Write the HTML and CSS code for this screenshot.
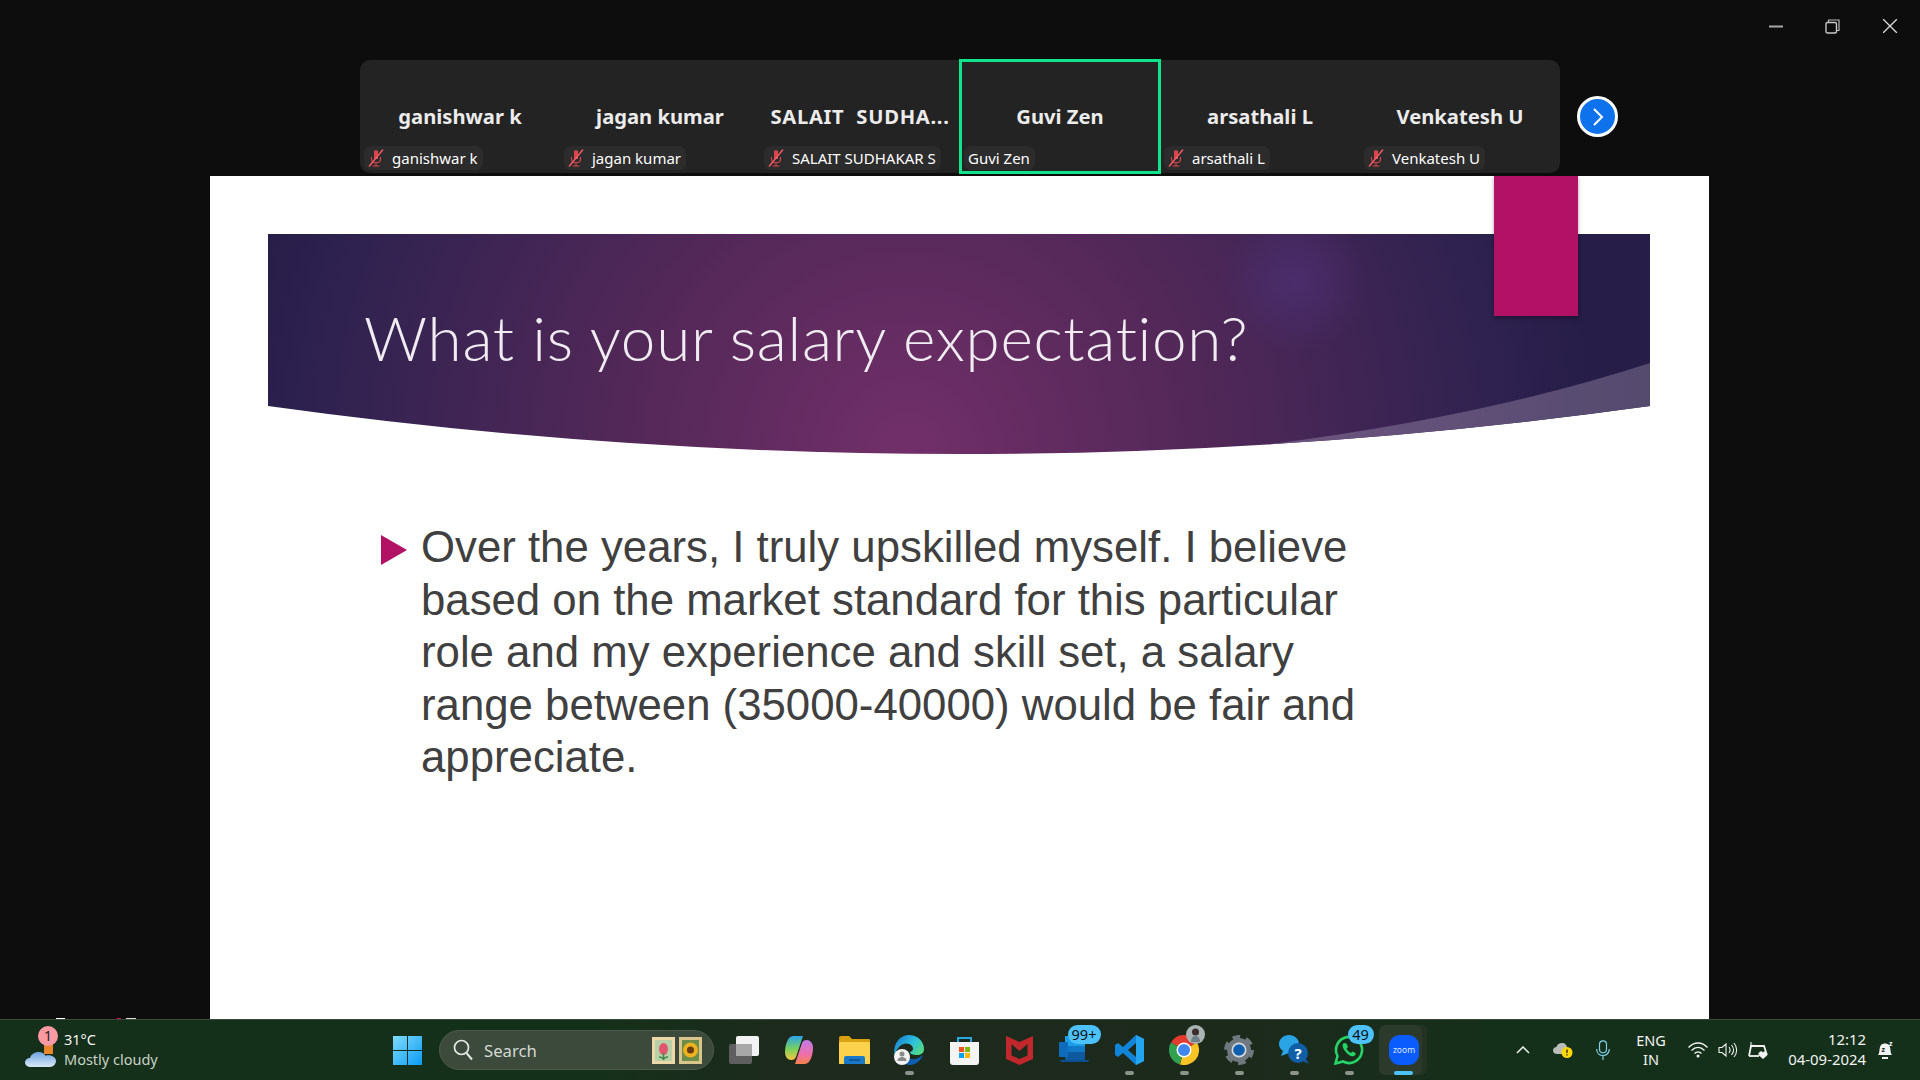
FILE: index.html
```html
<!DOCTYPE html>
<html lang="en">
<head>
  <meta charset="utf-8" />
  <title>Zoom - What is your salary expectation?</title>
  <link rel="stylesheet" href="styles.css">
</head>
<body>

<svg class="defs" width="0" height="0">
  <symbol id="micOff" viewBox="0 0 16 18">
    <path d="M6 1.500h4v8.500H6z" fill="#d9454c"/>
    <path d="M3.500 8v2c0 2.500 2 3.800 4.500 3.800s4.500-1.300 4.500-3.800V8M8 13.800V17M4.500 17h7" fill="none" stroke="#d9454c" stroke-width="1.100"/>
    <path d="M1 17.500 15 .5" stroke="#ee5a60" stroke-width="1.500"/>
  </symbol>
</svg>

<div class="main">
  <div class="titlebar">
    <svg class="winbtn" width="14" height="14" viewBox="0 0 14 14"><path d="M0 7.500h14" stroke="#a8a8a8" stroke-width="2"/></svg>
    <svg class="winbtn" width="15" height="15" viewBox="0 0 15 15"><path d="M3.500 3V1h10.500v10.500h-2" fill="none" stroke="#b8b8b8" stroke-width="1.200"/><rect x="1" y="3.500" width="10.500" height="10.500" rx="1.500" fill="none" stroke="#c8c8c8" stroke-width="1.400"/></svg>
    <svg class="winbtn" width="14" height="14" viewBox="0 0 14 14"><path d="M0 0 14 14M14 0 0 14" stroke="#dcdcdc" stroke-width="1.300"/></svg>
  </div>

  <div class="strip-row">
    <div class="strip">
      <div class="tile">
        <div class="tile-name">ganishwar k</div>
        <div class="tile-label"><svg class="mic" width="16" height="18"><use href="#micOff"/></svg>ganishwar k</div>
      </div>
      <div class="tile">
        <div class="tile-name">jagan kumar</div>
        <div class="tile-label"><svg class="mic" width="16" height="18"><use href="#micOff"/></svg>jagan kumar</div>
      </div>
      <div class="tile">
        <div class="tile-name tile-name-caps">SALAIT&nbsp; SUDHA...</div>
        <div class="tile-label"><svg class="mic" width="16" height="18"><use href="#micOff"/></svg>SALAIT SUDHAKAR S</div>
      </div>
      <div class="tile tile-active">
        <div class="tile-name">Guvi Zen</div>
        <div class="tile-label">Guvi Zen</div>
      </div>
      <div class="tile">
        <div class="tile-name">arsathali L</div>
        <div class="tile-label"><svg class="mic" width="16" height="18"><use href="#micOff"/></svg>arsathali L</div>
      </div>
      <div class="tile">
        <div class="tile-name">Venkatesh U</div>
        <div class="tile-label"><svg class="mic" width="16" height="18"><use href="#micOff"/></svg>Venkatesh U</div>
      </div>
    </div>
    <div class="next-btn">
      <svg width="16" height="22" viewBox="0 0 16 22"><path d="M4 3l8 8-8 8" fill="none" stroke="#fff" stroke-width="2"/></svg>
    </div>
  </div>

  <div class="slide">
    <div class="banner">
      <svg class="banner-bg" width="1382" height="221" viewBox="0 0 1382 221">
        <defs>
          <radialGradient id="bannerGrad" gradientUnits="userSpaceOnUse" cx="640" cy="220" r="690">
            <stop offset="0" stop-color="#722f69"/>
            <stop offset="0.42" stop-color="#522858"/>
            <stop offset="0.85" stop-color="#2f2250"/>
            <stop offset="1" stop-color="#261d48"/>
          </radialGradient>
          <radialGradient id="bannerGlow">
            <stop offset="0" stop-color="#4b2d6c" stop-opacity="1"/>
            <stop offset="1" stop-color="#4b2d6c" stop-opacity="0"/>
          </radialGradient>
          <linearGradient id="swooshGrad" x1="0" y1="0" x2="1" y2="0">
            <stop offset="0" stop-color="#6d5580"/>
            <stop offset="1" stop-color="#544a6e"/>
          </linearGradient>
        </defs>
        <path d="M0 0H1382V172Q691 268 0 172Z" fill="url(#bannerGrad)"/>
        <circle cx="1026" cy="46" r="75" fill="url(#bannerGlow)"/>
        <path d="M1382 129Q1220 182 1000 210.400Q1191 198.500 1382 172Z" fill="url(#swooshGrad)"/>
      </svg>
      <h1 class="slide-title">What is your salary expectation?</h1>
    </div>
    <div class="ribbon"></div>
    <div class="slide-body">
      <svg class="bullet" width="26" height="30" viewBox="0 0 26 30"><path d="M0 0 26 15 0 30Z" fill="#b31166"/></svg>
      <p>Over the years, I truly upskilled myself. I believe based on the market standard for this particular role and my experience and skill set, a salary range between (35000-40000) would be fair and appreciate.</p>
    </div>
  </div>

  <span class="speck speck-a"></span>
  <span class="speck speck-b"></span>
  <span class="speck speck-c"></span>
</div>

<div class="taskbar">
  <div class="weather">
    <div class="weather-icon">
      <svg width="32" height="26" viewBox="0 0 32 26">
        <defs><linearGradient id="cloudGrad" x1="0" y1="0" x2="0" y2="1"><stop offset="0" stop-color="#6ea4e0"/><stop offset="1" stop-color="#dbe9f8"/></linearGradient></defs>
        <rect x="19" y="2" width="9" height="10" fill="#e8862a"/>
        <path d="M6 25c-3.500 0-6-1.800-6-4.500S2.500 16 5 16c1-3.500 4.500-6 8.500-6 3.500 0 6 1.500 7 3.800 1-.5 2-.5 3-.5 4 0 7.500 2.700 7.500 5.700S28 25 25 25Z" fill="url(#cloudGrad)"/>
      </svg>
      <span class="weather-badge">1</span>
    </div>
    <div class="weather-text">
      <div class="weather-temp">31°C</div>
      <div class="weather-desc">Mostly cloudy</div>
    </div>
  </div>

  <svg class="start" width="29" height="29" viewBox="0 0 29 29">
    <defs><linearGradient id="startGrad" x1="0" y1="0" x2="1" y2="1"><stop offset="0" stop-color="#7fdcfb"/><stop offset="1" stop-color="#0b9bf5"/></linearGradient></defs>
    <path d="M0 0h14v14H0zM15 0h14v14H15zM0 15h14v14H0zM15 15h14v14H15z" fill="url(#startGrad)"/>
  </svg>

  <div class="search">
    <svg width="20" height="22" viewBox="0 0 20 22"><circle cx="8.500" cy="8.500" r="7" fill="none" stroke="#e4e8e4" stroke-width="1.700"/><path d="M13.500 14l5.500 6.500" stroke="#e4e8e4" stroke-width="2"/></svg>
    <span class="search-text">Search</span>
    <svg class="stamps" width="50" height="27" viewBox="0 0 50 27">
      <rect x="0" y="0" width="23" height="27" fill="#ead9a6"/>
      <rect x="3" y="3" width="17" height="21" fill="#b7d0a6"/>
      <ellipse cx="11.500" cy="12" rx="4.500" ry="6" fill="#e0556e"/>
      <path d="M11.500 16v6M7 20c2 0 4 1 4.500 3M16 20c-2 0-4 1-4.500 3" stroke="#3f8a4a" stroke-width="1.500" fill="none"/>
      <rect x="27" y="0" width="23" height="27" fill="#d9c48a"/>
      <rect x="30" y="3" width="17" height="21" fill="#6c8c4a"/>
      <circle cx="38.500" cy="13" r="7.500" fill="#eeb21f"/>
      <circle cx="38.500" cy="13" r="3.500" fill="#6b3c12"/>
    </svg>
  </div>

  <div class="apps">
    <div class="app">
      <svg width="30" height="28" viewBox="0 0 30 28"><rect x="0" y="8" width="23" height="20" rx="2" fill="#5f5f5f"/><rect x="7" y="0" width="23" height="20" rx="2" fill="#f2f2f2"/><rect x="7" y="8" width="16" height="12" fill="#a8a8a8"/></svg>
    </div>
    <div class="app">
      <svg width="30" height="30" viewBox="0 0 30 30">
        <defs><linearGradient id="copA" x1="0" y1="0" x2="0" y2="1"><stop offset="0" stop-color="#2aa4ea"/><stop offset="0.55" stop-color="#7ad25a"/><stop offset="1" stop-color="#f5c542"/></linearGradient><linearGradient id="copB" x1="0" y1="0" x2="0" y2="1"><stop offset="0" stop-color="#c27be8"/><stop offset="0.6" stop-color="#ee6fa8"/><stop offset="1" stop-color="#f5824a"/></linearGradient></defs>
        <path d="M9 1h10L12 22c-1 2-2 3-5 3-3 0-6-3-6-8 0-7 3-16 8-16Z" fill="url(#copA)"/>
        <path d="M21 29H11l7-21c1-2 2-3 5-3 3 0 6 3 6 8 0 7-3 16-8 16Z" fill="url(#copB)"/>
      </svg>
    </div>
    <div class="app">
      <svg width="31" height="28" viewBox="0 0 31 28"><path d="M0 2a2 2 0 0 1 2-2h8l3 3h-13Z" fill="#d9a010"/><rect x="0" y="3" width="31" height="25" rx="1" fill="#d9a010"/><rect x="0" y="6" width="31" height="22" rx="1" fill="#fcd24c"/><path d="M5 28v-6a2 2 0 0 1 2-2h17a2 2 0 0 1 2 2v6Z" fill="#1a78c8"/><path d="M10 24h11" stroke="#0a4f90" stroke-width="1.500"/></svg>
    </div>
    <div class="app has-dot">
      <svg width="30" height="30" viewBox="0 0 30 30">
        <defs><linearGradient id="edgeGrad" x1="0" y1="0" x2="1" y2="0.600"><stop offset="0" stop-color="#1272c8"/><stop offset="0.6" stop-color="#2cc0e0"/><stop offset="1" stop-color="#50d88a"/></linearGradient></defs>
        <path d="M15 0c8 0 15 6 15 14 0 4-3 6-7 6-4 0-7-1-7-3 3-1 4-3 2-6-3-4-10-3-13 1-3 3-4 6-4 9C-2 12 4 0 15 0Z" fill="url(#edgeGrad)"/>
        <path d="M12 21c4 5 11 4 17-1-2 6-8 10-13 10-3 0-5-1-6-3Z" fill="#0f5fb0"/>
        <circle cx="8" cy="22" r="8" fill="#f4f4f4"/>
        <circle cx="8" cy="19" r="2.500" fill="#8a8a8a"/>
        <path d="M3.500 26c0-3 2-4 4.500-4s4.500 1 4.500 4Z" fill="#8a8a8a"/>
      </svg>
    </div>
    <div class="app">
      <svg width="29" height="29" viewBox="0 0 29 29"><path d="M8 7V2h13v5" fill="none" stroke="#2aa8e0" stroke-width="2"/><path d="M0 6h29v20a3 3 0 0 1-3 3H3a3 3 0 0 1-3-3Z" fill="#f4f4f4"/><path d="M9 11h5v5H9z" fill="#f25022"/><path d="M15 11h5v5h-5z" fill="#7fba00"/><path d="M9 17h5v5H9z" fill="#00a4ef"/><path d="M15 17h5v5h-5z" fill="#ffb900"/></svg>
    </div>
    <div class="app">
      <svg width="27" height="29" viewBox="0 0 27 29"><path d="M0 0 13.500 6 27 0V23L13.500 29 0 23ZM5.500 8V19.500L13.500 23 21.500 19.500V8L13.500 15Z" fill="#c0282d" fill-rule="evenodd"/></svg>
    </div>
    <div class="app">
      <svg width="31" height="28" viewBox="0 0 31 28"><rect x="6" y="0" width="20" height="22" fill="#1f9ee8"/><rect x="6" y="10" width="20" height="6" fill="#1278c8"/><rect x="6" y="16" width="20" height="8" fill="#0f5a9e"/><path d="M0 24h31l-3 2H3Z" fill="#0c4f90"/><rect x="0" y="6" width="9" height="15" rx="1" fill="#0f6cbd"/></svg>
      <span class="app-badge badge-wide">99+</span>
    </div>
    <div class="app has-dot">
      <svg width="29" height="30" viewBox="0 0 29 30"><path d="M21 0 29 4V26L21 30 8 18 3 22 0 20V10L3 8 8 12Z M21 8 13 15 21 22Z" fill="#1184d8" fill-rule="evenodd"/><path d="M21 0 29 4V26L21 30Z" fill="#23a5f0"/></svg>
    </div>
    <div class="app has-dot">
      <svg width="30" height="30" viewBox="0 0 30 30"><path d="M15 15 2 7.500A15 15 0 0 1 28 7.500Z" fill="#e33b2e"/><path d="M15 15 2 7.500A15 15 0 0 0 11 29.500Z" fill="#31a04f"/><path d="M15 15 28 7.500A15 15 0 0 1 11 29.500Z" fill="#f9c326"/><circle cx="15" cy="15" r="7.500" fill="#fff"/><circle cx="15" cy="15" r="6" fill="#3f86ee"/></svg>
      <svg class="app-avatar" width="19" height="19" viewBox="0 0 19 19"><circle cx="9.500" cy="9.500" r="9.500" fill="#aab4b4"/><circle cx="9.500" cy="7" r="3.500" fill="#3a2e2a"/><path d="M5 17c0-4 2-6 4.500-6s4.500 2 4.500 6Z" fill="#6f8088"/></svg>
    </div>
    <div class="app has-dot">
      <svg width="30" height="30" viewBox="0 0 30 30"><circle cx="15" cy="15" r="12" fill="#70787f"/><circle cx="15" cy="15" r="13" fill="none" stroke="#70787f" stroke-width="4" stroke-dasharray="7.600 6"/><circle cx="15" cy="15" r="7.500" fill="#d4d8dc"/><circle cx="15" cy="15" r="5.800" fill="#0f5fb0"/></svg>
    </div>
    <div class="app has-dot">
      <svg width="30" height="30" viewBox="0 0 30 30"><path d="M10 0c5.500 0 10 4 10 9s-4 9-9 9l-1 0-8 3 2-5C1.500 14 0 12 0 9c0-5 4.500-9 10-9Z" fill="#2ba4e6"/><circle cx="19" cy="18" r="10" fill="#0f5ea8"/><path d="M24 26l6 3-4-6Z" fill="#0f5ea8"/><text x="19" y="24" class="help-mark">?</text></svg>
    </div>
    <div class="app has-dot">
      <svg width="30" height="30" viewBox="0 0 30 30"><path d="M1.500 28.500 3.500 21A13 13 0 1 1 9 26.500Z" fill="none" stroke="#25d366" stroke-width="2.600"/><path d="M10 8c-2 1-2 4 1 8s6 6 9 5c1-.5 2-2 1.500-3l-3-1.500-1.500 1.500c-2-1-3.500-2.500-4.500-4.500l1.500-1.500-1.500-3.500Z" fill="#25d366"/></svg>
      <span class="app-badge badge-round">49</span>
    </div>
    <div class="app app-current">
      <svg width="30" height="30" viewBox="0 0 30 30"><rect width="30" height="30" rx="11" fill="#0b5cff"/><text x="15" y="18" class="zoom-mark">zoom</text></svg>
    </div>
  </div>

  <div class="tray">
    <svg width="14" height="8" viewBox="0 0 14 8"><path d="M1 7l6-6 6 6" fill="none" stroke="#f2f2f2" stroke-width="1.500"/></svg>
    <svg class="tray-cloud" width="20" height="15" viewBox="0 0 20 15"><path d="M4 11C1.500 11 0 9.500 0 7.500S1.500 4 3.500 4C4 1.500 6.500 0 9 0c3 0 5 2 5 5v6Z" fill="#b9bcb9"/><circle cx="14" cy="9.500" r="5.500" fill="#ffd60a"/><path d="M14 6.500v3.500M14 11.200v1.300" stroke="#222" stroke-width="1.300"/></svg>
    <svg class="tray-mic" width="14" height="20" viewBox="0 0 14 20"><rect x="3.500" y="0.800" width="7" height="12" rx="3.500" fill="none" stroke="#7fd0e8" stroke-width="1.200"/><path d="M.7 9c0 4 2.800 6.500 6.300 6.500s6.300-2.500 6.300-6.500M7 15.500V20" fill="none" stroke="#7fd0e8" stroke-width="1.200"/></svg>
    <div class="tray-lang">ENG<br>IN</div>
    <svg class="tray-wifi" width="20" height="16" viewBox="0 0 20 16"><path d="M.5 5.500C6-.5 14-.5 19.500 5.500M3.500 8.500c4-4 9-4 13 0M6.500 11.500c2-2 5-2 7 0" fill="none" stroke="#f2f2f2" stroke-width="1.300"/><circle cx="10" cy="14" r="1.500" fill="#f2f2f2"/></svg>
    <svg class="tray-vol" width="20" height="16" viewBox="0 0 20 16"><path d="M1 5.500h3L8 2v12l-4-3.500H1Z" fill="none" stroke="#f2f2f2" stroke-width="1.100"/><path d="M11 5c1.500 2 1.500 4 0 6M13.500 3c2.500 3 2.500 7 0 10M16 1c3.500 4 3.500 10 0 14" fill="none" stroke="#f2f2f2" stroke-width="1.100"/></svg>
    <svg class="tray-batt" width="20" height="17" viewBox="0 0 20 17"><path d="M1 14 3 4h13l2 6" fill="none" stroke="#f2f2f2" stroke-width="1.800"/><path d="M1 14h10" stroke="#f2f2f2" stroke-width="1.800"/><path d="M3 0v5l3-2" fill="none" stroke="#f2f2f2" stroke-width="1.100"/><path d="M15 17l-4-3.500a2.300 2.300 0 0 1 4-3 2.300 2.300 0 0 1 4 3Z" fill="#f2f2f2"/></svg>
    <div class="clock">12:12<br>04-09-2024</div>
    <svg class="tray-bell" width="17" height="21" viewBox="0 0 17 21"><path d="M1 15c2-2 1-8 3-10 2-2 6-2 8 0 2 2 1 8 3 10Z" fill="#f2f2f2"/><path d="M5 18h6" stroke="#f2f2f2" stroke-width="2"/><text x="4.500" y="12" class="bell-z">z</text><text x="12" y="6" class="bell-z2">z</text></svg>
  </div>
</div>

</body>
</html>
```

FILE: styles.css
```css
html, body {
  margin: 0;
  padding: 0;
}

body {
  width: 1920px;
  height: 1080px;
  overflow: hidden;
  background: #0d0d0d;
  display: flex;
  flex-direction: column;
  font-family: "Noto Sans", "Open Sans", sans-serif;
}

.defs {
  position: absolute;
}

.main {
  position: relative;
  height: 1019px;
  display: flex;
  flex-direction: column;
}

/* window buttons */
.titlebar {
  height: 59px;
  box-sizing: border-box;
  padding: 19px 23px 0 0;
  display: flex;
  justify-content: flex-end;
  align-items: flex-start;
  gap: 42px;
}

.winbtn:last-child {
  margin-left: 1px;
}

/* participant strip */
.strip-row {
  height: 117px;
  padding-left: 360px;
  display: flex;
  align-items: flex-start;
}

.strip {
  width: 1200px;
  height: 113px;
  margin-top: 1px;
  background: #232323;
  border-radius: 10px;
  display: flex;
}

.tile {
  width: 200px;
  box-sizing: border-box;
  padding: 0 4px 3px;
  display: flex;
  flex-direction: column;
  color: #fff;
}

.tile-active {
  outline: 3px solid #0fe38c;
  outline-offset: -2px;
}

.tile-name {
  margin-top: 41px;
  height: 30px;
  line-height: 30px;
  font-size: 20.200px;
  font-weight: 700;
  text-align: center;
  color: #ececec;
  white-space: nowrap;
}

.tile-name-caps {
  letter-spacing: 0.700px;
}

.tile-label {
  margin-top: auto;
  align-self: flex-start;
  height: 24px;
  line-height: 24px;
  padding: 0 5px 0 4px;
  border-radius: 7px;
  background: #2c2c2c;
  font-size: 15px;
  white-space: nowrap;
  display: flex;
  align-items: center;
}

.mic {
  margin-right: 8px;
  flex: none;
}

.next-btn {
  width: 35px;
  height: 35px;
  margin: 37px 0 0 17px;
  border: 3px solid #fff;
  border-radius: 50%;
  background: #0e72ed;
  display: flex;
  align-items: center;
  justify-content: center;
}

/* slide */
.slide {
  position: relative;
  width: 1499px;
  flex: 1;
  margin-left: 210px;
  padding-top: 58px;
  box-sizing: border-box;
  background: #fff;
  overflow: hidden;
}

.banner {
  position: relative;
  width: 1382px;
  height: 221px;
  margin-left: 58px;
  padding: 67px 0 0 96px;
  box-sizing: border-box;
}

.banner-bg {
  position: absolute;
  left: 0;
  top: 0;
}

.slide-title {
  position: relative;
  margin: 0;
  font-family: "Lato", sans-serif;
  font-weight: 300;
  font-size: 62px;
  line-height: 72px;
  letter-spacing: 0.700px;
  color: #f0ecf2;
  white-space: nowrap;
}

.ribbon {
  position: absolute;
  left: 1284px;
  top: 0;
  width: 84px;
  height: 140px;
  background: #b31166;
  box-shadow: 0 2px 4px rgba(0, 0, 0, 0.35);
}

.slide-body {
  margin: 66px 0 0 171px;
  display: flex;
  align-items: flex-start;
}

.bullet {
  flex: none;
  margin: 14px 14px 0 0;
}

.slide-body p {
  margin: 0;
  width: 960px;
  font-family: "Liberation Sans", Arial, sans-serif;
  font-size: 43.750px;
  line-height: 52.600px;
  color: #404040;
}

.speck {
  position: absolute;
  top: 1018px;
  height: 1px;
}

.speck-a {
  left: 56px;
  width: 9px;
  background: #fff;
}

.speck-b {
  left: 117px;
  width: 4px;
  background: #c8105f;
}

.speck-c {
  left: 126px;
  width: 10px;
  background: #ddd;
}

/* taskbar */
.taskbar {
  height: 61px;
  box-sizing: border-box;
  border-top: 1px solid #3b4a3b;
  background: linear-gradient(90deg, #15301a 0, #15301a 600px, #1d2a1d 800px, #1c2a1c 1250px, #14301a 1500px, #14301a 100%);
  display: flex;
  align-items: center;
  color: #f2f2f2;
}

.weather {
  width: 393px;
  flex: none;
  box-sizing: border-box;
  padding-left: 25px;
  display: flex;
  align-items: center;
}

.weather-icon {
  position: relative;
  width: 32px;
  height: 26px;
  margin: 9px 7px 0 0;
}

.weather-badge {
  position: absolute;
  left: 13px;
  top: -16px;
  width: 20px;
  height: 20px;
  line-height: 20px;
  border-radius: 50%;
  background: #ff99a4;
  color: #222;
  font-size: 14px;
  text-align: center;
}

.weather-text {
  margin-top: -2px;
  font-size: 14.500px;
  line-height: 20px;
}

.weather-temp {
  color: #f4f4f4;
}

.weather-desc {
  color: #c8d0c8;
}

.start {
  flex: none;
  margin-right: 17px;
}

.search {
  width: 275px;
  height: 40px;
  flex: none;
  box-sizing: border-box;
  padding: 0 11px 0 13px;
  margin-right: 2.500px;
  border: 1px solid #4b5a4b;
  border-radius: 20px;
  background: #3c4a3c;
  display: flex;
  align-items: center;
}

.search-text {
  margin-left: 11px;
  font-size: 16.700px;
  color: #d4d8d4;
}

.stamps {
  margin-left: auto;
}

.apps {
  display: flex;
  align-items: center;
}

.app {
  position: relative;
  width: 55px;
  height: 50px;
  display: flex;
  align-items: center;
  justify-content: center;
}

.has-dot::after {
  content: "";
  position: absolute;
  left: 23px;
  bottom: 0;
  width: 9px;
  height: 4px;
  border-radius: 2px;
  background: #8a948a;
}

.app-current {
  width: 43px;
  box-sizing: border-box;
  padding-left: 6px;
  margin: 0 9.500px 0 2.500px;
  border-radius: 6px;
  background: #2b3a2b;
  box-shadow: 5px 0 0 #243224;
}

.app-current::after {
  content: "";
  position: absolute;
  left: 15px;
  bottom: 0;
  width: 19px;
  height: 4px;
  border-radius: 2px;
  background: #4fc3f7;
}

.app-badge {
  position: absolute;
  top: 0;
  height: 19px;
  line-height: 19px;
  border-radius: 10px;
  background: #4cc2ff;
  color: #111;
  font-size: 14.500px;
  text-align: center;
}

.badge-wide {
  left: 21px;
  width: 33px;
}

.badge-round {
  left: 26px;
  width: 26px;
}

.app-avatar {
  position: absolute;
  left: 29px;
  top: 0;
}

.help-mark {
  font: 700 15px "Noto Sans", sans-serif;
  fill: #fff;
  text-anchor: middle;
}

.zoom-mark {
  font: 400 8.500px "Noto Sans", sans-serif;
  fill: #dce8ff;
  text-anchor: middle;
}

.tray {
  margin-left: 84.500px;
  display: flex;
  align-items: center;
}

.tray-cloud {
  margin-left: 23px;
}

.tray-mic {
  margin-left: 23px;
}

.tray-lang {
  width: 40px;
  margin-left: 21px;
  font-size: 14.500px;
  line-height: 19px;
  text-align: center;
}

.tray-wifi {
  margin-left: 17px;
}

.tray-vol {
  margin-left: 10px;
}

.tray-batt {
  margin-left: 10px;
}

.clock {
  width: 98px;
  font-size: 14.900px;
  line-height: 20.500px;
  margin-top: -2px;
  text-align: right;
}

.tray-bell {
  margin-left: 11px;
}

.bell-z {
  font: 700 7px "Noto Sans", sans-serif;
  fill: #14301a;
}

.bell-z2 {
  font: 700 7px "Noto Sans", sans-serif;
  fill: #f2f2f2;
}
```
